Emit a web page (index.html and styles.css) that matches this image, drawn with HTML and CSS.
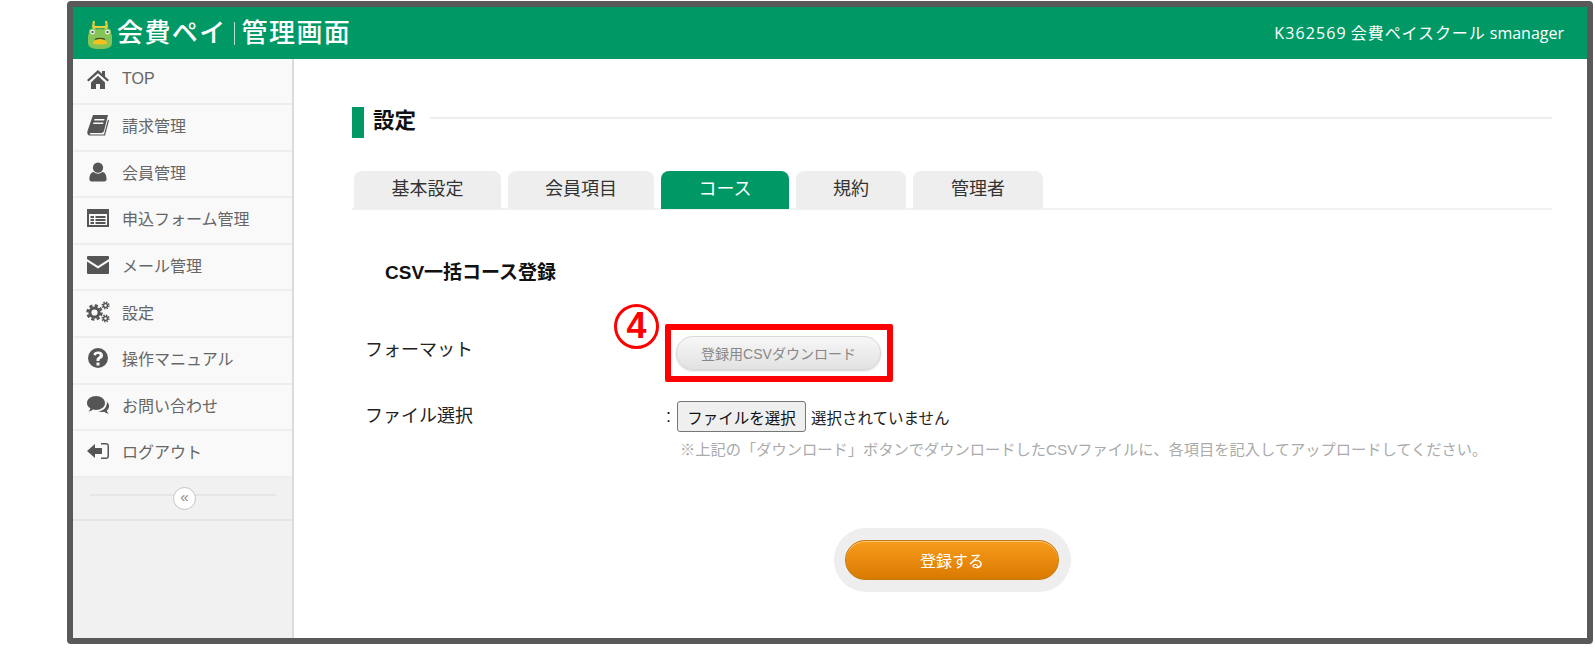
FILE: index.html
```html
<!DOCTYPE html>
<html lang="ja">
<head>
  <meta charset="UTF-8" />
  <title>会費ペイ 管理画面</title>
  <link rel="stylesheet" href="styles.css">
</head>
<body>
  <div class="frame">
    <header class="topbar">
      <div class="logo">
        <svg class="logo-mark" viewBox="0 0 26 29" width="26" height="29">
          <path d="M8 10C6 8 6 5 7 1M18 10c2-2 2-5 1-9M5 6c3 1.500 13 1.500 16 0" fill="none" stroke="#e6cf3c" stroke-width="2.200"/>
          <path d="M1 17c0-5 3-8 12-8s12 3 12 8v6c0 4-4 6-12 6S1 27 1 23z" fill="#85c456"/>
          <circle cx="5.500" cy="12" r="3.600" fill="#85c456"/><circle cx="20.500" cy="12" r="3.600" fill="#85c456"/>
          <circle cx="5.500" cy="12" r="2.400" fill="#e8f4ee"/><circle cx="20.500" cy="12" r="2.400" fill="#e8f4ee"/>
          <circle cx="5.500" cy="12" r="1.100" fill="#2d4a4a"/><circle cx="20.500" cy="12" r="1.100" fill="#2d4a4a"/>
          <path d="M6 23c1-5 13-5 14 0 .3 2-14.300 2-14 0z" fill="#f5c21b"/>
          <path d="M8 19.500c2-1.500 8-1.500 10 0" fill="none" stroke="#4a4a20" stroke-width="1.400"/>
        </svg>
        <span class="logo-name">会費ペイ</span>
        <span class="logo-sep"></span>
        <span class="logo-name">管理画面</span>
      </div>
      <div class="account"><span class="account-id">K362569</span> <span class="account-school">会費ペイスクール</span> smanager</div>
    </header>
    <div class="body-wrap">
      <nav class="sidebar">
        <a class="nav-item first"><svg viewBox="0 0 24 24"><path d="M12 3 1 13l1.500 1.600L12 6.200l9.500 8.400L23 13l-4-3.600V4h-3v2.700zM5 15.500 12 8.800l7 6.700V22h-5v-5h-4v5H5z"/></svg>TOP</a>
        <a class="nav-item"><svg viewBox="0 0 24 24"><path d="M7 2h15l-4 16a3 3 0 0 1-3 2H4.500c-.8 0-1 1.500 0 1.500H18l4-15 1 1-4 15H4C1.500 22.500 1 20 1.500 18zM8.500 6l-.4 1.500h10L18.500 6zm-1 3.500-.4 1.500h10l.4-1.500z"/></svg>請求管理</a>
        <a class="nav-item"><svg viewBox="-2 -2 28 28"><circle cx="12" cy="7" r="6"/><path d="M4.500 23C3 23 2 22 2 20.500c0-5 2-8.500 5-8.500 1.500 1.300 3 1.900 5 1.900s3.500-.6 5-1.900c3 0 5 3.500 5 8.500 0 1.500-1 2.500-2.500 2.500z"/></svg>会員管理</a>
        <a class="nav-item"><svg viewBox="0 0 24 24"><path fill-rule="evenodd" d="M1 3h22v18H1zm2 5v11h18V8zm1.500 2H8v2H4.500zm5 0h10v2h-10zm-5 3H8v2H4.500zm5 0h10v2h-10zm-5 3H8v2H4.500zm5 0h10v2h-10z"/></svg>申込フォーム管理</a>
        <a class="nav-item"><svg viewBox="0 0 24 24"><path d="M2 3h20a1 1 0 0 1 1 1v2l-11 7L1 6V4a1 1 0 0 1 1-1zM1 8.500l11 7 11-7V20a1 1 0 0 1-1 1H2a1 1 0 0 1-1-1z"/></svg>メール管理</a>
        <a class="nav-item"><svg viewBox="0 0 24 24">
          <circle cx="8.500" cy="12.500" r="4.600" fill="none" stroke="#555" stroke-width="3"/>
          <circle cx="8.500" cy="12.500" r="7" fill="none" stroke="#555" stroke-width="2.500" stroke-dasharray="3.200 2.300"/>
          <circle cx="19.500" cy="5.500" r="2" fill="none" stroke="#555" stroke-width="1.500"/>
          <circle cx="19.500" cy="5.500" r="3.400" fill="none" stroke="#555" stroke-width="1.300" stroke-dasharray="1.500 1.170"/>
          <circle cx="19.500" cy="18.500" r="2" fill="none" stroke="#555" stroke-width="1.500"/>
          <circle cx="19.500" cy="18.500" r="3.400" fill="none" stroke="#555" stroke-width="1.300" stroke-dasharray="1.500 1.170"/>
        </svg>設定</a>
        <a class="nav-item"><svg viewBox="0 0 24 24"><path fill-rule="evenodd" d="M12 2a10 10 0 1 1 0 20 10 10 0 0 1 0-20zm-1.500 14.500v3h3v-3zM12 5.500c-2.500 0-4 1.200-4.700 3l2.300 1.200c.4-1 1.100-1.700 2.300-1.700 1 0 1.800.5 1.800 1.300 0 .9-.7 1.300-1.700 1.900-1 .6-1.500 1.300-1.500 2.500v1.300h3v-.9c0-.6.4-.9 1.300-1.400 1.300-.8 2.200-1.800 2.200-3.300 0-2.400-2-3.900-4.200-3.900z"/></svg>操作マニュアル</a>
        <a class="nav-item"><svg viewBox="0 0 24 24"><path d="M10 3c5 0 9 3 9 7s-4 7-9 7c-1 0-2-.1-3-.4-1.200 1-2.700 1.700-4.500 1.900 1-1 1.600-2 1.900-3.200C2 14 1 12 1 10c0-4 4-7 9-7z"/><path d="M20.500 8.500C22.500 10 23.500 12 23 14c-.3 1.500-1 2.600-2.200 3.500.3 1.200.9 2.200 1.900 3.200-1.800-.2-3.300-.9-4.500-1.900-2 .5-4 .3-5.700-.4 4.500-.3 8.800-3.500 8.500-10.400z"/></svg>お問い合わせ</a>
        <a class="nav-item"><svg viewBox="0 0 24 24"><path d="M1 12 9 5v4h7v6H9v4z"/><path d="M15 4h5c1.700 0 3 1.300 3 3v10c0 1.700-1.300 3-3 3h-5v-1.500h5c1 0 1.500-.6 1.500-1.500V7c0-.9-.5-1.500-1.500-1.500h-5z"/></svg>ログアウト</a>
        <div class="collapse-row">
          <span class="collapse-line"></span>
          <span class="collapse-btn">«</span>
        </div>
      </nav>
      <main class="content">
        <div class="page-title">
          <span class="title-mark"></span>
          <h1>設定</h1>
          <span class="title-line"></span>
        </div>
        <div class="tabs">
          <div class="tab t1">基本設定</div>
          <div class="tab t2">会員項目</div>
          <div class="tab t3 active">コース</div>
          <div class="tab t4">規約</div>
          <div class="tab t5">管理者</div>
        </div>
        <h2 class="section-title">CSV一括コース登録</h2>
        <div class="form-row format-row">
          <div class="form-label">フォーマット</div>
          <div class="dl-box">
            <span class="step-num">4</span>
            <button class="dl-btn">登録用CSVダウンロード</button>
          </div>
        </div>
        <div class="form-row file-row">
          <div class="form-label">ファイル選択</div>
          <div class="file-col">
            <div class="file-line"><span class="colon">:</span><button class="file-btn">ファイルを選択</button><span class="file-none">選択されていません</span></div>
            <div class="note">※上記の「ダウンロード」ボタンでダウンロードしたCSVファイルに、各項目を記入してアップロードしてください。</div>
          </div>
        </div>
        <div class="submit-wrap">
          <div class="submit-ring"><button class="submit-btn">登録する</button></div>
        </div>
      </main>
    </div>
  </div>
</body>
</html>
```
FILE: styles.css
```css
* { box-sizing: border-box; }
body {
  margin: 0;
  background: #fff;
  font-family: "Liberation Sans", "Noto Sans CJK JP", sans-serif;
  color: #333;
}
.frame {
  margin: 1px 0 0 67px;
  width: 1526px;
  height: 643px;
  border: 6px solid #595959;
  border-radius: 4px;
  display: flex;
  flex-direction: column;
}
.topbar {
  height: 52px;
  background: #009966;
  color: #fff;
  display: flex;
  align-items: center;
  justify-content: space-between;
  padding: 0 23px 0 14px;
}
.logo { display: flex; align-items: center; }
.logo-mark { margin-right: 4px; margin-top: 2px; }
.logo-name {
  font-size: 26px;
  font-weight: 500;
  letter-spacing: 1.400px;
  line-height: 30px;
}
.logo-sep {
  width: 1px;
  height: 23px;
  background: #b5e0d0;
  margin: 0 7px 0 7px;
}
.account { font-family: "Open Sans", "Noto Sans CJK JP", sans-serif; font-size: 16px; padding-bottom: 3px; }
.account-id { letter-spacing: 1.100px; }
.account-school { letter-spacing: 0.900px; }
.body-wrap { flex: 1; display: flex; min-height: 0; }
.sidebar {
  width: 221px;
  background: #f1f1f1;
  border-right: 2px solid #dcdcdc;
}
.nav-item {
  height: 46.600px;
  display: flex;
  align-items: center;
  padding: 0 0 4px 13px;
  background: #f9f9f9;
  border-bottom: 2px solid #eee;
  font-size: 16px;
  color: #666;
}
.nav-item.first { height: 46px; }
.nav-item svg {
  width: 24px;
  height: 24px;
  fill: #555;
  margin-right: 12px;
  flex: none;
}
.collapse-row {
  height: 43px;
  padding-top: 16px;
  border-bottom: 2px solid #e5e5e5;
  position: relative;
}
.collapse-line {
  display: block;
  margin: 0 16px 0 17px;
  height: 2px;
  background: #e6e6e6;
}
.collapse-btn {
  position: absolute;
  left: 100px;
  top: 9px;
  width: 23px;
  height: 23px;
  border-radius: 50%;
  border: 1px solid #c4c4c4;
  background: #fff;
  color: #888;
  font-size: 15px;
  line-height: 18px;
  text-align: center;
}
.content {
  flex: 1;
  background: #fff;
  padding: 48px 35px 0 58px;
  color: #111;
}
.page-title { display: flex; align-items: flex-start; height: 31px; }
.title-mark { width: 12px; height: 31px; background: #009966; flex: none; }
.page-title h1 {
  margin: 0 14px 0 9px;
  font-size: 21.500px;
  line-height: 29px;
  font-weight: 700;
}
.title-line { flex: 1; height: 2px; background: #eee; margin-top: 10px; }
.tabs {
  display: flex;
  gap: 7px;
  height: 39px;
  margin-top: 33px;
  padding-left: 2px;
  border-bottom: 2px solid #f1f1f1;
}
.tab {
  height: 38px;
  background: #eee;
  border-radius: 8px 8px 0 0;
  font-size: 18px;
  line-height: 36px;
  text-align: center;
  color: #333;
}
.t1 { width: 147px; }
.t2 { width: 146px; }
.t3 { width: 128px; }
.t4 { width: 110px; }
.t5 { width: 130px; }
.tab.active { background: #009966; color: #fff; }
.section-title {
  margin: 50px 0 0 33px;
  font-size: 19px;
  line-height: 26px;
  font-weight: 700;
}
.form-row { display: flex; margin-left: 13px; }
.form-label { width: 298px; font-size: 18px; line-height: 26px; color: #222; }
.format-row { margin-top: 38px; align-items: flex-start; height: 58px; }
.format-row .form-label { margin-top: -5px; padding-top: 18px; height: 40px; }
.dl-box {
  width: 228px;
  height: 58px;
  border: 6px solid #ff0000;
  border-radius: 2px;
  margin-left: 2px;
  padding: 6px 0 0 5px;
  position: relative;
  background: #fff;
}
.step-num {
  position: absolute;
  left: -57px;
  top: -26px;
  width: 45px;
  height: 45px;
  border: 3px solid #ff0000;
  border-radius: 50%;
  background: #fff;
  color: #ff0000;
  font-size: 36px;
  font-weight: 700;
  line-height: 38px;
  text-align: center;
}
.dl-btn {
  width: 205px;
  height: 34px;
  border: 1px solid #d8d8d8;
  border-radius: 17px;
  background: linear-gradient(#f7f7f7, #e2e2e2);
  box-shadow: 0 1px 2px rgba(0,0,0,0.18);
  color: #888;
  font: 14px "Liberation Sans", "Noto Sans CJK JP", sans-serif;
  padding: 0;
}
.file-row { margin-top: 17px; }
.file-col { margin: 2px 0 0 3px; }
.file-row .form-label { margin-top: 4px; }
.file-line { display: flex; align-items: center; height: 31px; font-size: 15.500px; }
.colon { width: 11px; font-size: 18px; }
.file-btn {
  width: 129px;
  height: 31px;
  border: 1px solid #767676;
  border-radius: 3px;
  background: #efefef;
  color: #111;
  font: 15.500px "Liberation Sans", "Noto Sans CJK JP", sans-serif;
  padding: 0;
}
.file-none { margin-left: 5px; color: #222; }
.note { margin: 8px 0 0 14px; font-size: 15.250px; line-height: 20px; color: #aaa; white-space: nowrap; }
.submit-wrap { margin: 68px 0 0 482px; }
.submit-ring {
  width: 237px;
  height: 64px;
  border-radius: 32px;
  background: #eeeeee;
  padding: 12px 11px;
}
.submit-btn {
  display: block;
  width: 214px;
  height: 40px;
  border: 1px solid #c47a10;
  border-radius: 20px;
  background: linear-gradient(#f89c1c, #d97a00);
  box-shadow: inset 0 1px 0 #fbc679;
  color: #fff;
  font: 16px "Liberation Sans", "Noto Sans CJK JP", sans-serif;
  padding: 0;
}
```
